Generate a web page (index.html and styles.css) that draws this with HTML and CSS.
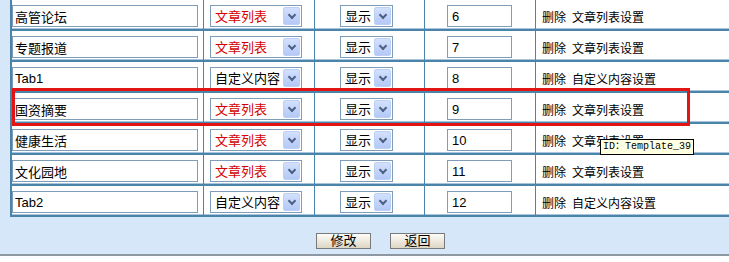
FILE: index.html
```html
<!DOCTYPE html>
<html lang="zh-CN">
<head>
<meta charset="UTF-8">
<title>栏目设置</title>
<link rel="stylesheet" href="styles.css">
</head>
<body>
<div class="page">
    <table class="tabs">
        <tr>
            <td class="c-name"><input type="text" class="name" value="高管论坛"></td>
            <td class="c-type"><span class="combo wide"><select class="red"><option>文章列表</option><option>自定义内容</option></select><span class="arrow"></span></span></td>
            <td class="c-show"><span class="combo narrow"><select><option>显示</option><option>隐藏</option></select><span class="arrow"></span></span></td>
            <td class="c-order"><input type="text" class="order" value="6"></td>
            <td class="c-ops"><a class="del">删除</a><a>文章列表设置</a></td>
        </tr>
        <tr>
            <td class="c-name"><input type="text" class="name" value="专题报道"></td>
            <td class="c-type"><span class="combo wide"><select class="red"><option>文章列表</option><option>自定义内容</option></select><span class="arrow"></span></span></td>
            <td class="c-show"><span class="combo narrow"><select><option>显示</option><option>隐藏</option></select><span class="arrow"></span></span></td>
            <td class="c-order"><input type="text" class="order" value="7"></td>
            <td class="c-ops"><a class="del">删除</a><a>文章列表设置</a></td>
        </tr>
        <tr>
            <td class="c-name"><input type="text" class="name" value="Tab1"></td>
            <td class="c-type"><span class="combo wide"><select><option>自定义内容</option><option>文章列表</option></select><span class="arrow"></span></span></td>
            <td class="c-show"><span class="combo narrow"><select><option>显示</option><option>隐藏</option></select><span class="arrow"></span></span></td>
            <td class="c-order"><input type="text" class="order" value="8"></td>
            <td class="c-ops"><a class="del">删除</a><a>自定义内容设置</a></td>
        </tr>
        <tr>
            <td class="c-name"><input type="text" class="name" value="国资摘要"></td>
            <td class="c-type"><span class="combo wide"><select class="red"><option>文章列表</option><option>自定义内容</option></select><span class="arrow"></span></span></td>
            <td class="c-show"><span class="combo narrow"><select><option>显示</option><option>隐藏</option></select><span class="arrow"></span></span></td>
            <td class="c-order"><input type="text" class="order" value="9"></td>
            <td class="c-ops"><a class="del">删除</a><a>文章列表设置</a></td>
        </tr>
        <tr>
            <td class="c-name"><input type="text" class="name" value="健康生活"></td>
            <td class="c-type"><span class="combo wide"><select class="red"><option>文章列表</option><option>自定义内容</option></select><span class="arrow"></span></span></td>
            <td class="c-show"><span class="combo narrow"><select><option>显示</option><option>隐藏</option></select><span class="arrow"></span></span></td>
            <td class="c-order"><input type="text" class="order" value="10"></td>
            <td class="c-ops"><a class="del">删除</a><a>文章列表设置</a></td>
        </tr>
        <tr>
            <td class="c-name"><input type="text" class="name" value="文化园地"></td>
            <td class="c-type"><span class="combo wide"><select class="red"><option>文章列表</option><option>自定义内容</option></select><span class="arrow"></span></span></td>
            <td class="c-show"><span class="combo narrow"><select><option>显示</option><option>隐藏</option></select><span class="arrow"></span></span></td>
            <td class="c-order"><input type="text" class="order" value="11"></td>
            <td class="c-ops"><a class="del">删除</a><a>文章列表设置</a></td>
        </tr>
        <tr>
            <td class="c-name"><input type="text" class="name" value="Tab2"></td>
            <td class="c-type"><span class="combo wide"><select><option>自定义内容</option><option>文章列表</option></select><span class="arrow"></span></span></td>
            <td class="c-show"><span class="combo narrow"><select><option>显示</option><option>隐藏</option></select><span class="arrow"></span></span></td>
            <td class="c-order"><input type="text" class="order" value="12"></td>
            <td class="c-ops"><a class="del">删除</a><a>自定义内容设置</a></td>
        </tr>
    </table>
    <div class="actions">
        <button type="button">修改</button>
        <button type="button">返回</button>
    </div>
    <div class="mark"></div>
    <div class="tip">ID：Template_39</div>
</div>
</body>
</html>
```

FILE: styles.css
```css
html, body {
    margin: 0;
    height: 100%;
    overflow: hidden;
    background-color: #fff;
}
body {
    font-family: "Liberation Sans", "Noto Sans CJK SC", sans-serif;
    font-size: 12px;
    color: #000;
}
.page {
    position: relative;
    background-color: #d5e7f8;
}
.tabs {
    margin-left: 10px;
    width: 730px;
    table-layout: fixed;
    border-collapse: separate;
    border-spacing: 0;
    border-left: 2px solid #4a84ab;
    background-color: #fff;
}
.tabs td {
    box-sizing: border-box;
    height: 31px;
    padding: 5px 0 2px 0;
    border-right: 1px solid #4a84ab;
    border-bottom: 2px solid #4a84ab;
    box-shadow: inset 0 -1px 0 #a9c5db;
    vertical-align: middle;
    white-space: nowrap;
}
.tabs .c-name {
    width: 192px;
}
.tabs .c-type {
    width: 111px;
    padding-left: 6px;
}
.tabs .c-show {
    width: 110px;
    padding-left: 25px;
}
.tabs .c-order {
    width: 111px;
    padding-left: 22px;
}
.tabs .c-ops {
    padding-left: 6px;
    border-right: none;
}
.tabs input[type="text"] {
    display: block;
    box-sizing: border-box;
    height: 22px;
    margin: 0;
    padding: 0 2px;
    border: 1px solid #7f9db9;
    font-family: "Liberation Sans", "Noto Sans CJK SC", sans-serif;
    font-size: 13px;
    color: #000;
    background-color: #fff;
}
.tabs input.name {
    width: 186px;
}
.tabs input.order {
    width: 65px;
    padding-left: 4px;
}
.combo {
    display: flex;
    box-sizing: border-box;
    height: 22px;
    padding: 1px;
    border: 1px solid #7f9db9;
    background-color: #fff;
}
.combo.wide {
    width: 92px;
}
.combo.narrow {
    width: 53px;
}
.combo select {
    flex: 1;
    min-width: 0;
    -webkit-appearance: none;
    appearance: none;
    margin: 0;
    padding: 0 0 0 3px;
    border: none;
    outline: none;
    background: transparent;
    font-family: "Liberation Sans", "Noto Sans CJK SC", sans-serif;
    font-size: 13px;
    color: #000;
}
.combo select.red {
    color: #d40000;
}
.combo .arrow {
    display: flex;
    align-items: center;
    justify-content: center;
    box-sizing: border-box;
    width: 17px;
    border: 1px solid #bccff5;
    border-radius: 2px;
    background: linear-gradient(to bottom, #d3e0fd, #b4c9f7);
}
.combo .arrow::after {
    content: "";
    width: 4px;
    height: 4px;
    margin-top: -3px;
    border-right: 2px solid #4d6185;
    border-bottom: 2px solid #4d6185;
    transform: rotate(45deg);
}
.tabs a {
    color: #000;
    text-decoration: none;
}
.tabs a.del {
    margin-right: 6px;
}
.actions {
    display: flex;
    justify-content: center;
    gap: 19px;
    height: 39px;
    padding-left: 32px;
    padding-top: 16px;
    box-sizing: border-box;
    border-bottom: 2px solid #8e98a2;
}
.actions button {
    box-sizing: border-box;
    width: 55px;
    height: 16px;
    padding: 0;
    border: 1px solid #7a7a7a;
    background: linear-gradient(to bottom, #fdfcf8, #ddd6c4);
    font-family: "Liberation Sans", "Noto Sans CJK SC", sans-serif;
    font-size: 13px;
    line-height: 14px;
    color: #000;
}
.mark {
    position: absolute;
    left: 12px;
    top: 88px;
    width: 678px;
    height: 38px;
    box-sizing: border-box;
    border: 3px solid #e31414;
}
.tip {
    position: absolute;
    left: 600px;
    top: 139px;
    height: 16px;
    box-sizing: border-box;
    padding: 0 2px;
    border: 1px solid #000;
    background-color: #ffffe1;
    font-family: "Liberation Mono", "Noto Sans CJK SC", monospace;
    font-size: 10px;
    line-height: 14px;
    white-space: nowrap;
}
```
